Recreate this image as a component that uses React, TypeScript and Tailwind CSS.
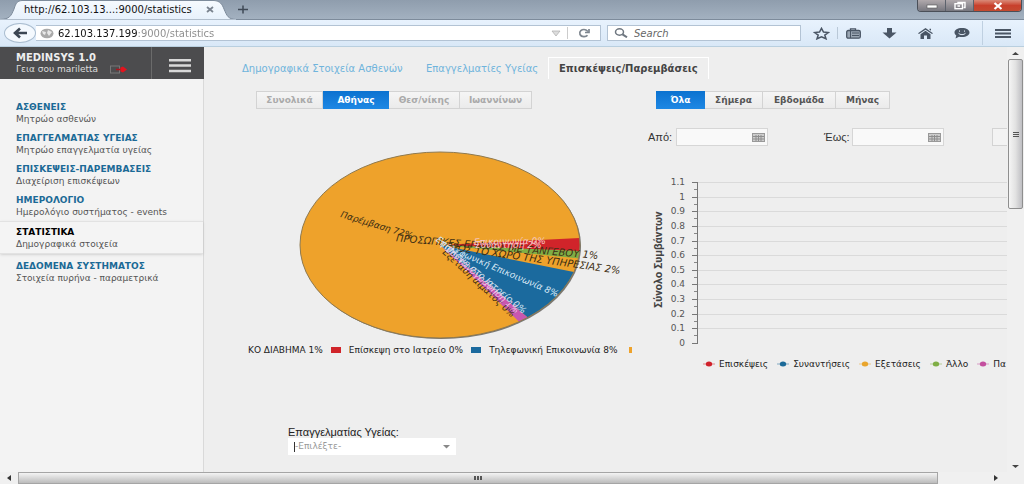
const menu = [
  { title: "ΑΣΘΕΝΕΙΣ", sub: "Μητρώο ασθενών" },
  { title: "ΕΠΑΓΓΕΛΜΑΤΙΑΣ ΥΓΕΙΑΣ", sub: "Μητρώο επαγγελματία υγείας" },
  { title: "ΕΠΙΣΚΕΨΕΙΣ-ΠΑΡΕΜΒΑΣΕΙΣ", sub: "Διαχείριση επισκέψεων" },
  { title: "ΗΜΕΡΟΛΟΓΙΟ", sub: "Ημερολόγιο συστήματος - events" },
  { title: "ΣΤΑΤΙΣΤΙΚΑ", sub: "Δημογραφικά στοιχεία", active: true },
  { title: "ΔΕΔΟΜΕΝΑ ΣΥΣΤΗΜΑΤΟΣ", sub: "Στοιχεία πυρήνα - παραμετρικά" },
];

const series = [
  { name: "Επισκέψεις", color: "#d0202a" },
  { name: "Συναντήσεις", color: "#1c6a99" },
  { name: "Εξετάσεις", color: "#e9a52c" },
  { name: "Άλλο", color: "#7fae45" },
  { name: "Πα", color: "#c44f9f" },
];

const ticks = ["1.1", "1", "0.9", "0.8", "0.7", "0.6", "0.5", "0.4", "0.3", "0.2", "0.1", "0"];
const tickY = (i: number) => 7 + Math.round(i * 14.64);

const segment =
  "h-[18px] border-y border-r border-[#d3d3d3] bg-linear-to-b from-[#f5f5f5] to-[#ebebeb] text-center text-[9px] leading-4 font-bold first:border-l";
const segmentOn = "h-[18px] bg-linear-to-b from-[#0b72d0] to-[#1e88e4] text-center text-[9px] leading-4 font-bold text-white";

function WindowButtons() {
  return (
    <div className="flex h-3 self-start overflow-hidden rounded-b border border-t-0 border-[#4a4f58] text-white">
      <button aria-label="Minimize" className="flex w-7 items-center justify-center border-r border-[#5c626c] bg-linear-to-b from-[#b0a9ac] to-[#77777f]">
        <svg width="12" height="10"><rect x="1" y="4" width="10" height="3" fill="#fff" stroke="#555" strokeWidth=".6" /></svg>
      </button>
      <button aria-label="Restore" className="flex w-7 items-center justify-center border-r border-[#5c626c] bg-linear-to-b from-[#b0a9ac] to-[#77777f]">
        <svg width="14" height="10" fill="none" stroke="#fff" strokeWidth="1.4"><path d="M5 2.5V1.5h7v5h-1.500" /><rect x="2" y="2.700" width="7.500" height="5" /><path d="M4.500 5h2.500" /></svg>
      </button>
      <button aria-label="Close window" className="flex w-[47px] items-center justify-center bg-linear-to-b from-[#d98a78] via-[#c8402c] to-[#c44a30]">
        <svg width="12" height="10" stroke="#fff" strokeWidth="2.2"><path d="M2.500 2l7 6M9.500 2l-7 6" /></svg>
      </button>
    </div>
  );
}

function BrowserChrome() {
  return (
    <header className="shrink-0">
      <div className="flex h-[19px] bg-linear-to-b from-[#8f9dad] to-[#a3b1c0]">
        <div className="relative flex w-[236px] items-center">
          <svg className="absolute inset-0" width="236" height="20" aria-hidden="true">
            <defs><linearGradient id="tab" x2="0" y2="1"><stop stopColor="#f6fafe" /><stop offset="1" stopColor="#e7f1fc" /></linearGradient></defs>
            <path d="M0 19.500C10 19 11 16 14 9C16 3 17 1 22 .5H214C220 1 222 4 224 9C227 16 228 19 236 19.500Z" fill="url(#tab)" stroke="#7d8b9b" />
            <path d="M0 20h236" stroke="#e7f1fc" />
          </svg>
          <span className="relative ml-6 flex-1 text-[10px] whitespace-nowrap text-[#111]">http://62.103.13...:9000/statistics</span>
          <button aria-label="Close tab" className="relative mr-[22px]">
            <svg width="8" height="7" stroke="#7b8490" strokeWidth="1.800"><path d="M1 1l6 5M7 1l-6 5" /></svg>
          </button>
        </div>
        <button aria-label="New tab" className="self-center">
          <svg width="14" height="9" stroke="#3f4956" strokeWidth="1.500"><path d="M2 4.500h10M7 .5v8" /></svg>
        </button>
        <div className="flex-1" />
        <WindowButtons />
        <div className="w-0.5" />
      </div>
      <div className="flex h-7 items-center border-t border-b border-t-[#7d8b9b] border-b-[#b9cfdf] bg-linear-to-b from-[#e8f2fd] to-[#d9e8f7]">
        <button aria-label="Back" className="ml-1 flex h-5 w-8 items-center justify-center rounded-[50%] border border-[#a9bccf] bg-[#f4f9fe]">
          <svg width="16" height="12" fill="none" stroke="#3c4653" strokeWidth="2.600"><path d="M15 6H3M8 1.500L3 6l5 4.500" /></svg>
        </button>
        <div className="flex h-4 min-w-0 flex-1 items-center border border-l-0 border-[#b3c3d4] bg-white">
          <svg className="ml-1 shrink-0" width="14" height="11"><ellipse cx="7" cy="5.500" rx="6.500" ry="4.800" fill="#a9a9a9" /><path d="M2 3l4 1-1 3-2-1zM8 2l4 2-3 4-2-3z" fill="#e8e8e8" /></svg>
          <input
            aria-label="Address"
            defaultValue="62.103.137.199:9000/statistics"
            className="ml-1 min-w-0 flex-1 bg-[linear-gradient(90deg,#111_79px,#8a8a8a_79px)] bg-clip-text text-[10px] text-transparent outline-none"
          />
          <svg width="10" height="7"><path d="M1 1h8L5 6z" fill="#ddd" stroke="#aaa" strokeWidth=".7" /></svg>
          <span className="ml-1.5 h-3 w-px bg-[#ccc]" />
          <button aria-label="Reload" className="mx-2.5">
            <svg width="12" height="10" fill="none" stroke="#7e868f" strokeWidth="1.700"><path d="M9.500 7.300C8 9.300 3.500 9.300 2 6.500C.8 3 4 1.500 6 1.500C8 1.500 9 2.500 10 3.500" /><path d="M11 1v3.500H7" /></svg>
          </button>
        </div>
        <label className="ml-1.5 flex h-4 w-[194px] items-center border border-[#b3c3d4] bg-white">
          <svg className="ml-1.5" width="14" height="10" fill="none" stroke="#6f7780"><ellipse cx="5.500" cy="4" rx="4" ry="3.200" strokeWidth="1.500" /><path d="M8.500 6.300l4.500 3" strokeWidth="2" /></svg>
          <input aria-label="Search" placeholder="Search" className="ml-1.5 w-32 bg-transparent text-[10px] italic outline-none placeholder:text-[#666]" />
        </label>
        <div className="flex items-center text-[#4a5665]">
          <button aria-label="Bookmark" className="ml-3">
            <svg width="17" height="13" fill="none" stroke="currentColor" strokeWidth="1.500"><path d="M8.500 1.300l2 3.700 5 .5-3.700 2.600 1.200 3.700-4.500-2-4.500 2 1.200-3.700L1.500 5.500l5-.5z" /></svg>
          </button>
          <span className="ml-[7px] h-3 w-px bg-[#b9c8d7]" />
          <button aria-label="Bookmarks list" className="ml-2">
            <svg width="15" height="11"><path d="M4.500 2.500V.8h5v1.700" fill="none" stroke="currentColor" strokeWidth="1.300" /><rect x=".7" y="2.500" width="13.600" height="7.700" rx="1.500" fill="#9aa6b3" stroke="currentColor" strokeWidth="1.300" /><path d="M4.500 2.500v7.500M6 5h7M6 7.500h7" stroke="currentColor" /></svg>
          </button>
          <button aria-label="Downloads" className="ml-[21px]">
            <svg width="15" height="11" fill="currentColor"><path d="M5 0h5v4.500h4.500L7.500 10.500.5 4.500H5z" /></svg>
          </button>
          <button aria-label="Home" className="ml-[21px]">
            <svg width="15" height="11" fill="currentColor"><path d="M7.500 0L15 5.300l-1 .8L7.500 1.700 1 6.100 0 5.300zM7.500 2.700l5 3.500V11H9V7.500H6V11H2.500V6.200zM11.500.8h1.500v2l-1.500-1z" /></svg>
          </button>
          <button aria-label="Chat" className="ml-[21px]">
            <svg width="16" height="12"><path d="M8 1c4.500 0 7.500 1.800 7.500 4.500S12.500 10 8 10c-1 0-2-.1-3-.3L1.500 11.500l.8-3C1 7.500.5 6.500.5 5.500.5 2.800 3.500 1 8 1z" fill="currentColor" /><path d="M4.500 6.300c1.500 1.800 5.500 1.800 7 0M5.500 3.500v1.200M10.500 3.500v1.200" stroke="#dfeaf6" fill="none" /></svg>
          </button>
          <span className="ml-3 h-6 w-px bg-[#bfd0e1]" />
          <button aria-label="Menu" className="mr-[13px] ml-3">
            <svg width="16" height="9" fill="currentColor"><path d="M0 0h16v2H0zM0 3.500h16v2H0zM0 7h16v2H0z" /></svg>
          </button>
        </div>
      </div>
    </header>
  );
}

function Sidebar() {
  return (
    <aside className="flex w-[204px] shrink-0 flex-col border-r border-[#d9d9d9] bg-[#f3f3f3]">
      <div className="-mr-px flex h-8 bg-[#4c4c4e] text-white">
        <div className="w-[152px] border-r border-[#6b6b6b] pt-[5px] pl-4">
          <div className="text-[10px] leading-3 font-bold text-[#eee]">MEDINSYS 1.0</div>
          <div className="flex items-center text-[9px] leading-[11px] whitespace-nowrap text-[#ddd]">
            Γεια σου mariletta
            <svg className="ml-3" width="17" height="9"><rect x=".5" y="1" width="9" height="7" fill="none" stroke="#777" /><path d="M6 4.500h5" stroke="#b0101a" strokeWidth="1.500" /><path d="M10.500 2.500L13 1.500 17 4.500 13 7.500l-2.500-1z" fill="#e3141e" /></svg>
          </div>
        </div>
        <button aria-label="Toggle menu" className="flex flex-1 items-center justify-center pt-1 pl-1">
          <svg width="22" height="15" fill="#d9d9d9"><path d="M0 1h22v2.500H0zM0 6.300h22v2.500H0zM0 11.700h22v2.500H0z" /></svg>
        </button>
      </div>
      <nav className="pt-[18px]">
        {menu.map((m) => (
          <a
            key={m.title}
            href="#"
            className={
              m.active
                ? "mb-0.5 block border-y border-[#e2e2e2] bg-[#f4f4f4] pt-1 pb-[3px] pl-4 shadow-sm"
                : "block pt-1 pb-[3px] pl-4"
            }
          >
            <div className={m.active ? "text-[9px] leading-3 font-bold text-black" : "text-[9px] leading-3 font-bold text-[#1b6a96]"}>{m.title}</div>
            <div className="text-[9px] leading-3 whitespace-nowrap text-[#555]">{m.sub}</div>
          </a>
        ))}
      </nav>
    </aside>
  );
}

function Pie() {
  return (
    <svg className="ml-10 block h-[200px] w-[390px] overflow-visible" viewBox="0 0 390 200" role="img" aria-label="Επισκέψεις/Παρεμβάσεις">
      <defs><clipPath id="disc"><ellipse cx="196" cy="100" rx="140" ry="93" /></clipPath></defs>
      <ellipse cx="197" cy="101" rx="140" ry="93" fill="#777" />
      <g clipPath="url(#disc)">
        <rect width="390" height="200" fill="#eea22b" />
        <path d="M196 100L346 92.500V107z" fill="#d0242a" />
        <path d="M196 100L346 106.500V114.500z" fill="#7fae45" />
        <path d="M196 100L346 130.200V200H317z" fill="#1b6a9e" />
        <path d="M196 100L317 200H299z" fill="#c857b0" />
      </g>
      <ellipse cx="196" cy="100" rx="140" ry="93" fill="none" stroke="#8f7a50" />
      <g fontSize="9" fontStyle="italic">
        <g fill="#3c2e14">
          <text transform="translate(96 72) rotate(17)">Παρέμβαση 72%</text>
          <text transform="translate(354 114) rotate(5)" textAnchor="end" fontSize="10">ΠΡΟΣΩΠΙΚΕΣ ΕΠΑΦΕΣ ΜΕ ΤΑΝΓΕΒΟΥ 1%</text>
          <text transform="translate(376 129) rotate(8)" textAnchor="end" fontSize="10">ΠΡΟΣ ΤΟ ΧΩΡΟ ΤΗΣ ΥΠΗΡΕΣΙΑΣ 2%</text>
          <text transform="translate(198 108) rotate(43)">Εξέταση αίματος 0%</text>
        </g>
        <g fill="#d9e8f5">
          <text transform="translate(313 152) rotate(23)" textAnchor="end">Τηλεφωνική Επικοινωνία 8%</text>
          <text transform="translate(279 169) rotate(40)" textAnchor="end">Επίσκεψη στο Ιατρείο 0%</text>
          <text transform="translate(201 105) rotate(42)" fill="#efc4e6">Συνταγογράφηση 1%</text>
        </g>
        <g fill="#f6c8c8">
          <text transform="translate(231 103)">Συνάντηση 2%</text>
          <text transform="translate(230 100) rotate(-1)">Επικοινωνία 0%</text>
        </g>
      </g>
    </svg>
  );
}

function Chart() {
  return (
    <svg className="block h-[175px] w-full" role="img" aria-label="Σύνολο Συμβάντων">
      <text transform="translate(22 133) rotate(-90)" fontSize="11" fontWeight="bold" fill="#444" className="font-['Roboto',sans-serif]">Σύνολο Συμβάντων</text>
      {ticks.map((t, i) => (
        <g key={t}>
          {i < 11 && <path d={`M58 ${tickY(i) + 0.5}H2000`} stroke="#dadada" />}
          <path d={`M52 ${tickY(i) + 0.5}h5`} stroke="#777" />
          {i < 11 && <path d={`M54 ${tickY(i) + 7.5}h3`} stroke="#888" />}
          <text x="45" y={tickY(i) + 3} textAnchor="end" fontSize="9" fill="#555">{t}</text>
        </g>
      ))}
      <path d="M57.500 7v162" stroke="#777" />
    </svg>
  );
}

function DateField({ id, label }: { id: string; label: string }) {
  return (
    <div className="flex items-center">
      <label htmlFor={id} className="w-7 font-['Liberation_Sans',sans-serif] text-[11px] leading-3 whitespace-nowrap text-[#333]">{label}</label>
      <div className="flex h-[18px] w-[92px] items-center border border-[#d6d6d6] bg-[#f9f9f9]">
        <input id={id} className="min-w-0 flex-1 bg-transparent px-1 text-[9px] outline-none" />
        <svg className="mr-0.5" width="13" height="9"><rect x=".5" y=".5" width="12" height="8" fill="#ccc" stroke="#999" /><path d="M1 3.500h11M1 6h11M4 2v6M6.500 2v6M9 2v6" stroke="#8e8e8e" /></svg>
      </div>
    </div>
  );
}

function VerticalBar() {
  return (
    <div className="flex w-[17px] shrink-0 flex-col items-center bg-[#f0f0f0]">
      <button aria-label="Scroll up" className="flex h-3 items-center"><svg width="7" height="3"><path d="M0 3L3.500 0 7 3z" fill="#444" /></svg></button>
      <div className="flex h-[150px] w-[15px] flex-col items-center justify-center gap-px rounded-xs border border-[#8e8e8e] bg-linear-to-r from-[#f5f5f5] via-[#e2e2e2] to-[#bfbfc3]">
        <span className="h-px w-1.5 bg-[#555]" />
        <span className="h-px w-1.5 bg-[#555]" />
        <span className="h-px w-1.5 bg-[#555]" />
      </div>
      <div className="flex-1" />
      <button aria-label="Scroll down" className="flex h-3 items-center"><svg width="7" height="3"><path d="M0 0h7L3.500 3z" fill="#444" /></svg></button>
    </div>
  );
}

export default function App() {
  return (
    <div className="flex h-screen flex-col overflow-hidden bg-[#eee] font-['DejaVu_Sans',sans-serif]">
      <BrowserChrome />
      <div className="flex min-h-0 flex-1">
        <Sidebar />
        <main className="min-w-0 flex-1 overflow-hidden">
          <div className="flex h-8 items-end pl-[38px] text-[10px] leading-[21px] whitespace-nowrap text-[#6fb4dc]">
            <a href="#" className="w-[184px]">Δημογραφικά Στοιχεία Ασθενών</a>
            <a href="#" className="w-[122px]">Επαγγελματίες Υγείας</a>
            <a href="#" className="border border-b-0 border-white px-2.5 font-bold text-[#444]">Επισκέψεις/Παρεμβάσεις</a>
          </div>
          <div className="flex">
            <section className="w-[436px] shrink-0 pt-3">
              <div className="ml-[52px] flex text-[#aaa]">
                <button className={`${segment} w-[67px]`}>Συνολικά</button>
                <button className={`${segmentOn} w-[66px]`}>Αθήνας</button>
                <button className={`${segment} w-[71px]`}>Θεσ/νίκης</button>
                <button className={`${segment} w-[72px]`}>Ιωαννίνων</button>
              </div>
              <div className="pt-9"><Pie /></div>
              <div className="-mt-px ml-11 flex w-[384px] items-center overflow-hidden text-[9px] leading-3 whitespace-nowrap text-[#222]">
                <span className="shrink-0">ΚΟ ΔΙΑΒΗΜΑ 1%</span>
                <i className="mx-2 h-1.5 w-2.5 shrink-0 bg-[#d0242a]" />
                <span className="shrink-0">Επίσκεψη στο Ιατρείο 0%</span>
                <i className="mx-2 h-1.5 w-2.5 shrink-0 bg-[#1b6a9e]" />
                <span className="shrink-0">Τηλεφωνική Επικοινωνία 8%</span>
                <i className="ml-auto h-1.5 w-[3px] shrink-0 bg-[#eea22b]" />
              </div>
              <div className="mt-[70px] ml-[84px] w-[168px]">
                <label htmlFor="pro" className="block font-['Liberation_Sans',sans-serif] text-[11px] leading-3 whitespace-nowrap text-[#222]">Επαγγελματίας Υγείας:</label>
                <div className="flex h-[17px] items-center bg-white pr-1.5 pl-1.5">
                  <span className="h-2.5 w-px bg-[#333]" />
                  <select id="pro" className="h-full min-w-0 flex-1 appearance-none bg-transparent text-[9px] text-[#999] outline-none">
                    <option>-Επιλέξτε-</option>
                  </select>
                  <svg width="7" height="4"><path d="M0 0h7L3.500 3.500z" fill="#888" /></svg>
                </div>
              </div>
            </section>
            <section className="min-w-0 flex-1 overflow-hidden pt-3">
              <div className="ml-4 flex text-[#555]">
                <button className={`${segmentOn} w-[49px]`}>Όλα</button>
                <button className={`${segment} w-[58px]`}>Σήμερα</button>
                <button className={`${segment} w-[73px]`}>Εβδομάδα</button>
                <button className={`${segment} w-[54px]`}>Μήνας</button>
              </div>
              <div className="mt-[19px] ml-2 flex gap-14">
                <DateField id="from" label="Από:" />
                <DateField id="to" label="Έως:" />
                <button aria-label="Αναζήτηση" className="-ml-2 h-[18px] w-[60px] shrink-0 border border-[#d3d3d3] bg-[#f3f3f3]" />
              </div>
              <div className="mt-[29px]"><Chart /></div>
              <div className="mt-2 ml-[63px] flex items-center gap-[9px] text-[9px] leading-3 whitespace-nowrap text-[#222]">
                {series.map((s) => (
                  <span key={s.name} className="flex items-center gap-1">
                    <svg width="12" height="6"><path d="M0 3h12" stroke={s.color} strokeOpacity=".5" /><ellipse cx="6" cy="3" rx="3.200" ry="2.500" fill={s.color} /></svg>
                    {s.name}
                  </span>
                ))}
              </div>
            </section>
          </div>
        </main>
        <VerticalBar />
      </div>
      <div className="flex h-3 shrink-0 items-center bg-[#f0f0f0]">
        <button aria-label="Scroll left" className="flex w-[18px] justify-center"><svg width="4" height="6"><path d="M4 0v6L0 3z" fill="#333" /></svg></button>
        <div className="flex h-3 flex-1 items-center justify-center gap-px border border-[#a5a5a5] bg-linear-to-b from-[#f4f4f4] to-[#bcbcbc]">
          <span className="h-1 w-0.5 bg-[#555]" />
          <span className="h-1 w-0.5 bg-[#555]" />
          <span className="h-1 w-0.5 bg-[#555]" />
        </div>
        <div className="w-14" />
        <button aria-label="Scroll right" className="flex w-[30px]"><svg width="4" height="6"><path d="M0 0v6l4-3z" fill="#333" /></svg></button>
      </div>
    </div>
  );
}
